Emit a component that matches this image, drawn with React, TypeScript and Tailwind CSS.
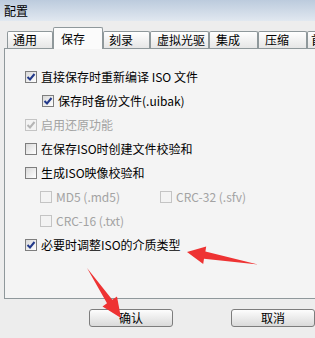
import React from "react";

function Box({ checked, disabled }: { checked?: boolean; disabled?: boolean }) {
  return (
    <span
      className={
        "relative flex h-[12px] w-[12px] shrink-0 items-center justify-center border " +
        (disabled
          ? "border-[#c4c4c4] bg-[#f3f3f3]"
          : "border-[#7e7e7e] bg-gradient-to-br from-[#d9d9d9] to-[#ffffff]")
      }
    >
      {checked && (
        <svg width="10" height="10" viewBox="0 0 10 10" className="block">
          <path
            d="M1.5 5 L4 7.5 L8.5 2"
            fill="none"
            stroke={disabled ? "#b5b5b5" : "#22398a"}
            strokeWidth="2"
          />
        </svg>
      )}
    </span>
  );
}

function Row({
  label,
  checked,
  disabled,
  indent,
}: {
  label: string;
  checked?: boolean;
  disabled?: boolean;
  indent: string;
}) {
  return (
    <div className={"flex h-[24px] items-center " + indent}>
      <Box checked={checked} disabled={disabled} />
      <span
        className={
          "ml-[4px] whitespace-nowrap text-[12px] leading-none " +
          (disabled ? "text-[#a3a3a3]" : "text-black")
        }
      >
        {label}
      </span>
    </div>
  );
}

function Tab({ label, w, pl }: { label: string; w: string; pl: string }) {
  return (
    <div
      className={
        "flex h-[17px] shrink-0 items-center overflow-hidden rounded-t-[2px] border border-b-0 border-[#8f989b] bg-gradient-to-b from-[#ffffff] to-[#e6e6e6] text-[12px] leading-none text-black " +
        w +
        " " +
        pl
      }
    >
      <span className="whitespace-nowrap">{label}</span>
    </div>
  );
}

export default function App() {
  return (
    <div className="relative h-[338px] w-[315px] overflow-hidden bg-[#ededed] font-[family-name:'Noto_Sans_CJK_SC','Noto_Sans',sans-serif]">
      {/* title bar */}
      <div className="flex h-[21px] items-center bg-gradient-to-b from-[#bccbdd] to-[#e1e8f0] pl-[4px] text-[12px] leading-none text-black">
        配置
      </div>

      {/* tabs */}
      <div className="relative z-10 mt-[6px] flex h-[21px] items-end pl-[7px]">
        <Tab label="通用" w="w-[46px]" pl="pl-[5px]" />
        <div className="relative -mb-[1px] flex h-[22px] w-[50px] shrink-0 items-center rounded-t-[2px] border border-b-0 border-[#8f989b] bg-[#fbfbfb] pl-[7px] text-[12px] leading-none text-black">
          保存
        </div>
        <Tab label="刻录" w="w-[47px]" pl="pl-[5px]" />
        <Tab label="虚拟光驱" w="w-[59px]" pl="pl-[6px]" />
        <Tab label="集成" w="w-[49px]" pl="pl-[6px]" />
        <Tab label="压缩" w="w-[49px]" pl="pl-[6px]" />
        <Tab label="首选项" w="w-[49px]" pl="pl-[3px]" />
      </div>

      {/* panel */}
      <div className="ml-[4px] h-[251px] w-[330px] border border-[#8f989b] bg-[#f4f4f4] pt-[16px]">
        <Row label="直接保存时重新编译 ISO 文件" checked indent="pl-[20px]" />
        <Row label="保存时备份文件(.uibak)" checked indent="pl-[37px]" />
        <Row label="启用还原功能" checked disabled indent="pl-[20px]" />
        <Row label="在保存ISO时创建文件校验和" indent="pl-[20px]" />
        <Row label="生成ISO映像校验和" indent="pl-[20px]" />
        <div className="flex">
          <div className="w-[155px]">
            <Row label="MD5 (.md5)" disabled indent="pl-[35px]" />
          </div>
          <Row label="CRC-32 (.sfv)" disabled indent="" />
        </div>
        <Row label="CRC-16 (.txt)" disabled indent="pl-[35px]" />
        <Row label="必要时调整ISO的介质类型" checked indent="pl-[20px]" />
      </div>

      {/* buttons */}
      <div className="relative mt-[10px] flex h-[18px]">
        <div className="relative ml-[89px] flex h-[18px] w-[86px] items-center justify-center rounded-[3px] border border-[#7d7d7d] bg-gradient-to-b from-[#fdfdfd] to-[#dadada] text-[12px] leading-none text-black">
          确认
        </div>
        <div className="relative ml-[58px] flex h-[18px] w-[86px] items-center justify-center rounded-[3px] border border-[#7d7d7d] bg-gradient-to-b from-[#fdfdfd] to-[#dadada] text-[12px] leading-none text-black">
          取消
        </div>
      </div>

      {/* red annotation arrows */}
      <svg
        className="pointer-events-none absolute left-0 top-0"
        width="315"
        height="338"
        viewBox="0 0 315 338"
      >
        <polygon
          points="187,252 206.2,246.5 205.4,251.5 258,264.5 204,258.8 203.2,264 "
          fill="#ee3333"
        />
        <polygon
          points="121,318 102.5,306.5 107,303.2 87,268 112.3,299.8 117,296.5"
          fill="#ee3333"
        />
      </svg>
    </div>
  );
}
